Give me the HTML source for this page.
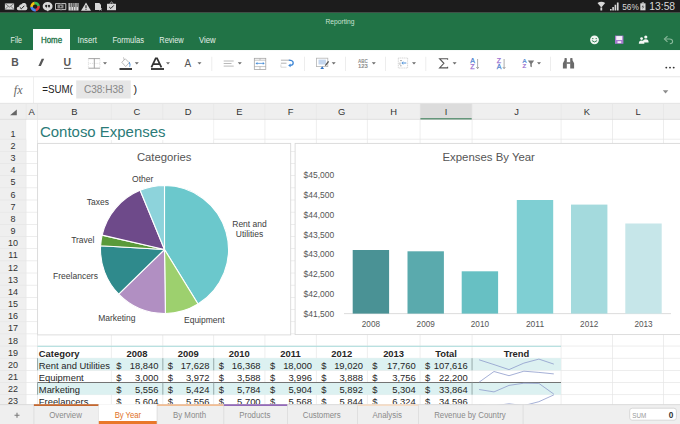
<!DOCTYPE html>
<html><head><meta charset="utf-8"><style>
html,body{margin:0;padding:0;width:680px;height:424px;overflow:hidden;background:#fff;}
svg{display:block;}
</style></head><body>
<svg width="680" height="424" viewBox="0 0 680 424">
<rect width="680" height="424" fill="#fff"/>
<rect x="0" y="0" width="680" height="12.8" fill="#1c1c1c"/>
<rect x="0" y="12.8" width="680" height="37.4" fill="#217346"/>
<rect x="4.9" y="3.4" width="9.2" height="6.2" fill="#d8d8d8"/><path d="M4.9 3.4 L9.5 7 L14.1 3.4 M4.9 9.6 L8.2 6.2 M14.1 9.6 L10.8 6.2" stroke="#555" stroke-width="0.7" fill="none"/>
<path d="M18.5 10.2 Q16.6 10.2 16.8 8.3 Q17 6.6 18.8 6.8 Q19.3 4.2 21.5 4.3 Q22.6 2.5 24.6 3 Q27 3.6 26.4 6.6 Q27.6 7.2 27.4 8.6 Q27.2 10.2 25.6 10.2Z" fill="#d8d8d8"/><path d="M19.8 7.3 L21.4 8.8 L24.3 5.8" stroke="#222" stroke-width="1" fill="none"/>
<g transform="translate(35.1,6.6)" fill="none" stroke-width="2.6"><path d="M-3.45 0.61 A3.5 3.5 0 0 1 -0.31 -3.49" stroke="#f4c20d"/><path d="M-0.61 -3.45 A3.5 3.5 0 0 1 3.49 -0.31" stroke="#3cba54"/><path d="M3.45 -0.61 A3.5 3.5 0 0 1 0.31 3.49" stroke="#db3236"/><path d="M0.61 3.45 A3.5 3.5 0 0 1 -3.49 0.31" stroke="#4885ed"/></g>
<path d="M47.6 2 A4.45 4.3 0 1 1 48.6 10.6 L48 11.6 L46.7 10.6 A4.45 4.3 0 0 1 47.6 2Z" fill="#d8d8d8"/><circle cx="46.2" cy="5.9" r="1.1" fill="#222"/><circle cx="49" cy="5.9" r="1.1" fill="#222"/><path d="M45.6 6.2 L46.2 8.2 L47 6.2 M48.4 6.2 L49 8.2 L49.8 6.2" fill="#222"/>
<path d="M55.5 3.6 H60.5 L61 4.2 L61.5 3.6 H65.8 V9.6 H61.5 L61 10.2 L60.5 9.6 H55.5Z" fill="none" stroke="#d8d8d8" stroke-width="0.9"/><rect x="57.5" y="4.6" width="6" height="3.8" fill="#d8d8d8" opacity="0.6"/><path d="M60 5.4 L62 6.5 L60 7.6Z" fill="#222"/>
<rect x="68.5" y="3" width="10" height="7.5" fill="#d8d8d8"/><path d="M71 3 V10.5 M73.5 3 V10.5 M76 3 V10.5" stroke="#222" stroke-width="0.5"/><path d="M70.2 3 V7 M72.4 3 V7 M74.7 3 V7 M77.2 3 V7" stroke="#444" stroke-width="0.9"/>
<path d="M86 2.5 L91 10.8 H81 Z" fill="#d8d8d8"/><path d="M86 5.2 V8.3" stroke="#222" stroke-width="1.1"/><circle cx="86" cy="9.5" r="0.55" fill="#222"/>
<path d="M95 3 H99.3 L101 4.7 V10 H95Z" fill="#d8d8d8"/><path d="M99.5 8.2 L102 10.5 M102 8.2 L99.5 10.5" stroke="#d8d8d8" stroke-width="0.7"/>
<rect x="107" y="3.8" width="9" height="6.4" fill="#d8d8d8"/><path d="M109.5 3.9 L111.5 2 L113.5 3.9" stroke="#d8d8d8" stroke-width="0.8" fill="none"/><path d="M109.2 7 L110.8 8.5 L113.8 5.4" stroke="#222" stroke-width="1" fill="none"/>
<path d="M597.5 3 Q601.3 0.5 605.2 3 L601.3 7.5Z" fill="#d8d8d8"/><rect x="600.4" y="7.5" width="1.8" height="3" fill="#d8d8d8"/>
<path d="M610 10.5 V9 H611.6 V10.5Z M612.3 10.5 V7 H613.9 V10.5Z M614.6 10.5 V4.8 H616.2 V10.5Z M616.9 10.5 V2.4 H618.6 V10.5Z" fill="#d8d8d8"/>
<text x="622.2" y="10" font-family="'Liberation Sans', sans-serif" font-size="8.3" fill="#d8d8d8">56%</text>
<rect x="640.3" y="3.3" width="5.2" height="7" fill="#d8d8d8"/><rect x="641.8" y="2.4" width="2.2" height="1" fill="#d8d8d8"/><path d="M643.6 4.2 L641.5 7.3 H643 L642.2 9.6 L644.4 6.4 H642.9Z" fill="#555"/>
<text x="649.3" y="10.4" font-family="'Liberation Sans', sans-serif" font-size="11" fill="#d8d8d8" textLength="25.8" lengthAdjust="spacingAndGlyphs">13:58</text>
<text x="340" y="23.8" text-anchor="middle" font-family="'Liberation Sans', sans-serif" font-size="6.7" fill="#c9e2d3">Reporting</text>
<rect x="33" y="29" width="37" height="22" fill="#fff"/>
<text x="10.6" y="43.2" font-family="'Liberation Sans', sans-serif" font-size="8.3" fill="#e3efe7" textLength="11.4" lengthAdjust="spacingAndGlyphs">File</text>
<text x="77.6" y="43.2" font-family="'Liberation Sans', sans-serif" font-size="8.3" fill="#e3efe7" textLength="19.4" lengthAdjust="spacingAndGlyphs">Insert</text>
<text x="112.4" y="43.2" font-family="'Liberation Sans', sans-serif" font-size="8.3" fill="#e3efe7" textLength="31.6" lengthAdjust="spacingAndGlyphs">Formulas</text>
<text x="159.3" y="43.2" font-family="'Liberation Sans', sans-serif" font-size="8.3" fill="#e3efe7" textLength="24.4" lengthAdjust="spacingAndGlyphs">Review</text>
<text x="199" y="43.2" font-family="'Liberation Sans', sans-serif" font-size="8.3" fill="#e3efe7" textLength="16.7" lengthAdjust="spacingAndGlyphs">View</text>
<text x="40.9" y="43.2" font-family="'Liberation Sans', sans-serif" font-size="8.3" fill="#217346" stroke="#217346" stroke-width="0.3" textLength="21.2" lengthAdjust="spacingAndGlyphs">Home</text>
<circle cx="594.5" cy="39.8" r="4.4" fill="#f0f5f1"/><circle cx="592.8" cy="38.6" r="0.7" fill="#217346"/><circle cx="596.2" cy="38.6" r="0.7" fill="#217346"/><path d="M591.9 40.6 Q594.5 43.3 597.1 40.6" stroke="#217346" stroke-width="0.9" fill="none"/>
<rect x="615" y="35.6" width="8.4" height="8.2" fill="#a77bd0"/><rect x="616.2" y="36.1" width="6" height="3.9" fill="#f4f0f8"/><rect x="617.5" y="41.2" width="3.7" height="1.9" fill="#f4f0f8"/>
<circle cx="645.8" cy="37" r="1.6" fill="#f4f8f5"/><path d="M642.7 42.5 Q642.7 39.3 645.8 39.3 Q648.6 39.3 648.6 42.5Z" fill="#f4f8f5"/><circle cx="641.6" cy="38.6" r="1.4" fill="#f4f8f5"/><path d="M638.8 43.7 Q638.8 40.6 641.6 40.6 Q644.4 40.6 644.4 43.7Z" fill="#f4f8f5"/>
<path d="M665.5 39 H669.5 Q672.6 39 672.6 41.5 Q672.6 43.7 669.8 43.7" stroke="#8ab99b" stroke-width="1.1" fill="none"/><path d="M667.5 36.2 L664.4 39 L667.5 41.8" stroke="#8ab99b" stroke-width="1.1" fill="none"/>
<rect x="0" y="50.2" width="680" height="26.6" fill="#fff"/>
<rect x="0" y="76.4" width="680" height="0.8" fill="#e2e2e2"/>
<text x="11.3" y="66" font-family="'Liberation Sans', sans-serif" font-size="10.4" font-weight="bold" fill="#585858">B</text>
<path d="M38.4 66.1 L40.9 66.1 L44.2 58.8 L41.7 58.8Z" fill="#585858"/>
<text x="63.6" y="66.2" font-family="'Liberation Sans', sans-serif" font-size="10.4" font-weight="bold" fill="#585858">U</text><rect x="64" y="67.9" width="7.4" height="1" fill="#585858"/>
<path d="M88.4 58.6 V68.2 M99.9 58.6 V68.2 M88.4 63.4 H99.9" stroke="#cfcfcf" stroke-width="0.7" stroke-dasharray="0.9 0.9" fill="none"/><path d="M88.4 58.6 H99.9 M88.4 68.2 H99.9 M94.3 58.6 V68.2" stroke="#9a9a9a" stroke-width="0.9"/>
<path d="M103 62.3 H107 L105 64.6Z" fill="#6a6a6a"/>
<path d="M121.8 62.3 L125.3 58.8 L129.2 62.7 L125.7 66.6Z" fill="none" stroke="#aaa" stroke-width="0.8"/><path d="M124.2 60 L123.5 57.3" stroke="#aaa" stroke-width="0.7"/><path d="M129.4 61.8 Q131.2 64 130.2 66.8 L129.3 66.8 Q130 64.5 129 62.6Z" fill="#2d7dd2"/><rect x="119.5" y="68.2" width="12.5" height="1.6" fill="#111"/>
<path d="M134.8 62.3 H138.8 L136.8 64.6Z" fill="#6a6a6a"/>
<path d="M151.4 67.4 L155.7 58.4 H157.1 L161.4 67.4 M153.3 64.2 H159.6" stroke="#333" stroke-width="1.75" fill="none"/><rect x="151" y="68.2" width="13" height="1.6" fill="#111"/>
<path d="M166 62.3 H170 L168 64.6Z" fill="#6a6a6a"/>
<text x="184.6" y="66.8" font-family="'Liberation Sans', sans-serif" font-size="10" fill="#555">A</text>
<path d="M197.5 62.3 H201.5 L199.5 64.6Z" fill="#6a6a6a"/>
<rect x="211.5" y="56.7" width="0.7" height="14.3" fill="#e6e6e6"/>
<path d="M223.7 61 H233.7 M223.7 63.5 H231.5 M223.7 66.1 H233.7" stroke="#a8a8a8" stroke-width="0.8"/>
<path d="M237.8 62.3 H241.8 L239.8 64.6Z" fill="#6a6a6a"/>
<rect x="254.3" y="58.3" width="11.5" height="11.3" fill="none" stroke="#a0a0a0" stroke-width="0.75"/><path d="M254.3 60.2 H265.8 M254.3 66.6 H265.8 M260 58.3 V60.2 M260 66.6 V69.6" stroke="#a0a0a0" stroke-width="0.6"/><path d="M256.6 63.4 H263.6" stroke="#4a8fd8" stroke-width="0.8"/><path d="M255.5 63.4 L257.4 62.1 V64.7Z M264.7 63.4 L262.8 62.1 V64.7Z" fill="#4a8fd8"/>
<path d="M280.9 60.2 H289.5 M280.9 63.2 H286.5" stroke="#a0a0a0" stroke-width="0.8"/><path d="M280.9 67.2 H286.5 M280.9 67.2 V64.5" stroke="#c8c8c8" stroke-width="0.7"/><path d="M288.8 60.2 Q293.2 60.3 293.2 63 Q293.2 65.4 290.2 65.4" stroke="#3d86d6" stroke-width="1.3" fill="none"/><path d="M288.2 65.4 L290.6 63.6 V67.2Z" fill="#3d86d6"/>
<rect x="304.2" y="56.7" width="0.7" height="14.3" fill="#e6e6e6"/>
<rect x="316.4" y="58.2" width="11.4" height="8.4" fill="#fff" stroke="#b4b4b4" stroke-width="0.8"/><rect x="318.5" y="59.6" width="7.4" height="4.9" fill="#c4d6ee"/><path d="M320.3 68.9 L322.2 66.2 L324.1 68.9Z" fill="#2f74c8"/><path d="M328.6 61.3 L325.3 65.6" stroke="#555" stroke-width="1.3"/>
<path d="M331.7 62.3 H335.7 L333.7 64.6Z" fill="#6a6a6a"/>
<rect x="345" y="56.7" width="0.7" height="14.3" fill="#e6e6e6"/>
<text x="357.9" y="62.6" font-family="'Liberation Sans', sans-serif" font-size="5.6" font-weight="bold" fill="#8a8a8a" textLength="10" lengthAdjust="spacingAndGlyphs">ABC</text><text x="357.9" y="67.6" font-family="'Liberation Sans', sans-serif" font-size="6" font-weight="bold" fill="#8a8a8a" textLength="10" lengthAdjust="spacingAndGlyphs">123</text>
<path d="M371.8 62.3 H375.8 L373.8 64.6Z" fill="#6a6a6a"/>
<rect x="385.3" y="56.7" width="0.7" height="14.3" fill="#e6e6e6"/>
<rect x="398.3" y="58" width="9.3" height="10" fill="none" stroke="#c4c4c4" stroke-width="0.7" stroke-dasharray="1.2 0.6"/><path d="M400 60.6 H402 M400 65.8 H401.6 M400 62.5 V64.8" stroke="#999" stroke-width="0.8"/><path d="M402 63 H406.3" stroke="#4a8fd8" stroke-width="1"/><path d="M403.3 61.7 L401.8 63 L403.3 64.3" stroke="#4a8fd8" stroke-width="0.8" fill="none"/>
<path d="M412 62.3 H416 L414 64.6Z" fill="#6a6a6a"/>
<rect x="425.5" y="56.7" width="0.7" height="14.3" fill="#e6e6e6"/>
<path d="M447.6 59.8 V58.7 H439.6 L443.9 63.3 L439.6 67.9 H447.6 V66.8" stroke="#555" stroke-width="1.1" fill="none" stroke-linejoin="miter"/>
<path d="M452.6 62.3 H456.6 L454.6 64.6Z" fill="#6a6a6a"/>
<text x="470.2" y="63.2" font-family="'Liberation Sans', sans-serif" font-size="7" fill="#4a7fd0" stroke="#4a7fd0" stroke-width="0.25">A</text><text x="470.2" y="69" font-family="'Liberation Sans', sans-serif" font-size="7" fill="#9a6fd0" stroke="#9a6fd0" stroke-width="0.25">Z</text>
<path d="M477.59999999999997 59 V68.5 M476.3 67 L477.59999999999997 68.7 L478.9 67" stroke="#888" stroke-width="0.7" fill="none"/>
<text x="496.7" y="63.2" font-family="'Liberation Sans', sans-serif" font-size="7" fill="#9a6fd0" stroke="#9a6fd0" stroke-width="0.25">Z</text><text x="496.7" y="69" font-family="'Liberation Sans', sans-serif" font-size="7" fill="#4a7fd0" stroke="#4a7fd0" stroke-width="0.25">A</text>
<path d="M504.09999999999997 59 V68.5 M502.8 67 L504.09999999999997 68.7 L505.4 67" stroke="#888" stroke-width="0.7" fill="none"/>
<text x="522.4" y="62.8" font-family="'Liberation Sans', sans-serif" font-size="6" fill="#4a7fd0" stroke="#4a7fd0" stroke-width="0.2">A</text><text x="522.4" y="68.4" font-family="'Liberation Sans', sans-serif" font-size="6" fill="#9a6fd0" stroke="#9a6fd0" stroke-width="0.2">Z</text><path d="M527.8 60.6 H534.2 L531.8 63.8 V67.2 L530.3 66.4 V63.8Z" fill="#777"/>
<path d="M537 62.3 H541 L539 64.6Z" fill="#6a6a6a"/>
<rect x="550.2" y="56.7" width="0.7" height="14.3" fill="#e6e6e6"/>
<path d="M562.9 68.6 V63.2 L564.5 60.3 V58.3 Q565.6 57.9 566.8 58.3 V68.6Z M574.1 68.6 V63.2 L572.5 60.3 V58.3 Q571.4 57.9 570.2 58.3 V68.6Z" fill="#6a6a6a"/><rect x="566.5" y="62.2" width="4" height="1.6" fill="#6a6a6a"/>
<circle cx="666.3" cy="67.6" r="0.95" fill="#333"/><circle cx="670" cy="67.6" r="0.95" fill="#333"/><circle cx="673.7" cy="67.6" r="0.95" fill="#333"/>
<text x="13.8" y="94.2" font-family="Liberation Serif, serif" font-style="italic" font-size="12" fill="#666">fx</text>
<rect x="33.2" y="77" width="0.6" height="26.3" fill="#e4e4e4"/>
<text x="42.2" y="92.6" font-family="'Liberation Sans', sans-serif" font-size="10.6" fill="#222" textLength="30.6" lengthAdjust="spacingAndGlyphs">=SUM(</text>
<rect x="76.2" y="80.4" width="54.5" height="18.1" fill="#e6e6e6"/>
<text x="83.9" y="92.6" font-family="'Liberation Sans', sans-serif" font-size="10.6" fill="#888" textLength="39.7" lengthAdjust="spacingAndGlyphs">C38:H38</text>
<text x="133.6" y="92.6" font-family="'Liberation Sans', sans-serif" font-size="10.6" fill="#222">)</text>
<path d="M662.8 90.2 H668.3 L665.55 93.4Z" fill="#8c8c8c"/>
<rect x="0" y="102.9" width="680" height="0.8" fill="#d8d8d8"/>
<rect x="0" y="103.7" width="680" height="15.599999999999994" fill="#efefef"/>
<rect x="420" y="103.7" width="52" height="15.599999999999994" fill="#dcdcdc"/>
<rect x="420" y="118.3" width="52" height="1.7" fill="#1f6e42"/>
<rect x="0" y="119.3" width="26" height="304.7" fill="#efefef"/>
<rect x="25.7" y="103.7" width="0.7" height="320.3" fill="#e6e6e6"/>
<rect x="37.2" y="103.7" width="0.7" height="320.3" fill="#e6e6e6"/>
<rect x="110.9" y="103.7" width="0.7" height="320.3" fill="#e6e6e6"/>
<rect x="162.5" y="103.7" width="0.7" height="320.3" fill="#e6e6e6"/>
<rect x="213.39999999999998" y="103.7" width="0.7" height="320.3" fill="#e6e6e6"/>
<rect x="264.59999999999997" y="103.7" width="0.7" height="320.3" fill="#e6e6e6"/>
<rect x="315.9" y="103.7" width="0.7" height="320.3" fill="#e6e6e6"/>
<rect x="366.9" y="103.7" width="0.7" height="320.3" fill="#e6e6e6"/>
<rect x="419.7" y="103.7" width="0.7" height="320.3" fill="#e6e6e6"/>
<rect x="471.7" y="103.7" width="0.7" height="320.3" fill="#e6e6e6"/>
<rect x="560.7" y="103.7" width="0.7" height="320.3" fill="#e6e6e6"/>
<rect x="612.3000000000001" y="103.7" width="0.7" height="320.3" fill="#e6e6e6"/>
<rect x="663.2" y="103.7" width="0.7" height="320.3" fill="#e6e6e6"/>
<rect x="0" y="138.79999999999998" width="680" height="0.7" fill="#e6e6e6"/>
<rect x="0" y="150.96999999999997" width="680" height="0.7" fill="#e6e6e6"/>
<rect x="0" y="163.14" width="680" height="0.7" fill="#e6e6e6"/>
<rect x="0" y="175.30999999999997" width="680" height="0.7" fill="#e6e6e6"/>
<rect x="0" y="187.48" width="680" height="0.7" fill="#e6e6e6"/>
<rect x="0" y="199.64999999999998" width="680" height="0.7" fill="#e6e6e6"/>
<rect x="0" y="211.82" width="680" height="0.7" fill="#e6e6e6"/>
<rect x="0" y="223.98999999999998" width="680" height="0.7" fill="#e6e6e6"/>
<rect x="0" y="236.15999999999997" width="680" height="0.7" fill="#e6e6e6"/>
<rect x="0" y="248.32999999999998" width="680" height="0.7" fill="#e6e6e6"/>
<rect x="0" y="260.5" width="680" height="0.7" fill="#e6e6e6"/>
<rect x="0" y="272.67" width="680" height="0.7" fill="#e6e6e6"/>
<rect x="0" y="284.84" width="680" height="0.7" fill="#e6e6e6"/>
<rect x="0" y="297.01" width="680" height="0.7" fill="#e6e6e6"/>
<rect x="0" y="309.18" width="680" height="0.7" fill="#e6e6e6"/>
<rect x="0" y="321.34999999999997" width="680" height="0.7" fill="#e6e6e6"/>
<rect x="0" y="333.52" width="680" height="0.7" fill="#e6e6e6"/>
<rect x="0" y="345.69" width="680" height="0.7" fill="#e6e6e6"/>
<rect x="0" y="357.85999999999996" width="680" height="0.7" fill="#e6e6e6"/>
<rect x="0" y="370.03" width="680" height="0.7" fill="#e6e6e6"/>
<rect x="0" y="382.2" width="680" height="0.7" fill="#e6e6e6"/>
<rect x="0" y="394.36999999999995" width="680" height="0.7" fill="#e6e6e6"/>
<rect x="0" y="406.54" width="680" height="0.7" fill="#e6e6e6"/>
<rect x="0" y="118.89999999999999" width="680" height="0.8" fill="#dadada"/>
<text x="31.75" y="114.8" text-anchor="middle" font-family="'Liberation Sans', sans-serif" font-size="9.4" fill="#333">A</text>
<text x="74.35" y="114.8" text-anchor="middle" font-family="'Liberation Sans', sans-serif" font-size="9.4" fill="#333">B</text>
<text x="137.0" y="114.8" text-anchor="middle" font-family="'Liberation Sans', sans-serif" font-size="9.4" fill="#333">C</text>
<text x="188.25" y="114.8" text-anchor="middle" font-family="'Liberation Sans', sans-serif" font-size="9.4" fill="#333">D</text>
<text x="239.29999999999998" y="114.8" text-anchor="middle" font-family="'Liberation Sans', sans-serif" font-size="9.4" fill="#333">E</text>
<text x="290.54999999999995" y="114.8" text-anchor="middle" font-family="'Liberation Sans', sans-serif" font-size="9.4" fill="#333">F</text>
<text x="341.7" y="114.8" text-anchor="middle" font-family="'Liberation Sans', sans-serif" font-size="9.4" fill="#333">G</text>
<text x="393.6" y="114.8" text-anchor="middle" font-family="'Liberation Sans', sans-serif" font-size="9.4" fill="#333">H</text>
<text x="446.0" y="114.8" text-anchor="middle" font-family="'Liberation Sans', sans-serif" font-size="9.4" fill="#333">I</text>
<text x="516.5" y="114.8" text-anchor="middle" font-family="'Liberation Sans', sans-serif" font-size="9.4" fill="#333">J</text>
<text x="586.8" y="114.8" text-anchor="middle" font-family="'Liberation Sans', sans-serif" font-size="9.4" fill="#333">K</text>
<text x="638.05" y="114.8" text-anchor="middle" font-family="'Liberation Sans', sans-serif" font-size="9.4" fill="#333">L</text>
<path d="M16.8 109.5 V115.2 H10.1Z" fill="#666"/>
<text x="13" y="136.50" text-anchor="middle" font-family="'Liberation Sans', sans-serif" font-size="9" fill="#333">1</text>
<text x="13" y="148.88" text-anchor="middle" font-family="'Liberation Sans', sans-serif" font-size="9" fill="#333">2</text>
<text x="13" y="161.05" text-anchor="middle" font-family="'Liberation Sans', sans-serif" font-size="9" fill="#333">3</text>
<text x="13" y="173.22" text-anchor="middle" font-family="'Liberation Sans', sans-serif" font-size="9" fill="#333">4</text>
<text x="13" y="185.39" text-anchor="middle" font-family="'Liberation Sans', sans-serif" font-size="9" fill="#333">5</text>
<text x="13" y="197.56" text-anchor="middle" font-family="'Liberation Sans', sans-serif" font-size="9" fill="#333">6</text>
<text x="13" y="209.73" text-anchor="middle" font-family="'Liberation Sans', sans-serif" font-size="9" fill="#333">7</text>
<text x="13" y="221.90" text-anchor="middle" font-family="'Liberation Sans', sans-serif" font-size="9" fill="#333">8</text>
<text x="13" y="234.07" text-anchor="middle" font-family="'Liberation Sans', sans-serif" font-size="9" fill="#333">9</text>
<text x="13" y="246.24" text-anchor="middle" font-family="'Liberation Sans', sans-serif" font-size="9" fill="#333">10</text>
<text x="13" y="258.42" text-anchor="middle" font-family="'Liberation Sans', sans-serif" font-size="9" fill="#333">11</text>
<text x="13" y="270.58" text-anchor="middle" font-family="'Liberation Sans', sans-serif" font-size="9" fill="#333">12</text>
<text x="13" y="282.75" text-anchor="middle" font-family="'Liberation Sans', sans-serif" font-size="9" fill="#333">13</text>
<text x="13" y="294.93" text-anchor="middle" font-family="'Liberation Sans', sans-serif" font-size="9" fill="#333">14</text>
<text x="13" y="307.09" text-anchor="middle" font-family="'Liberation Sans', sans-serif" font-size="9" fill="#333">15</text>
<text x="13" y="319.26" text-anchor="middle" font-family="'Liberation Sans', sans-serif" font-size="9" fill="#333">16</text>
<text x="13" y="331.44" text-anchor="middle" font-family="'Liberation Sans', sans-serif" font-size="9" fill="#333">17</text>
<text x="13" y="343.60" text-anchor="middle" font-family="'Liberation Sans', sans-serif" font-size="9" fill="#333">18</text>
<text x="13" y="355.77" text-anchor="middle" font-family="'Liberation Sans', sans-serif" font-size="9" fill="#333">19</text>
<text x="13" y="367.94" text-anchor="middle" font-family="'Liberation Sans', sans-serif" font-size="9" fill="#333">20</text>
<text x="13" y="380.11" text-anchor="middle" font-family="'Liberation Sans', sans-serif" font-size="9" fill="#333">21</text>
<text x="13" y="392.28" text-anchor="middle" font-family="'Liberation Sans', sans-serif" font-size="9" fill="#333">22</text>
<text x="13" y="404.45" text-anchor="middle" font-family="'Liberation Sans', sans-serif" font-size="9" fill="#333">23</text>
<text x="13" y="416.62" text-anchor="middle" font-family="'Liberation Sans', sans-serif" font-size="9" fill="#333">24</text>
<rect x="26.4" y="119.8" width="186.9" height="20.299999999999997" fill="#fff"/>
<rect x="37.2" y="119.3" width="0.7" height="30" fill="#e6e6e6"/>
<text x="40" y="137.2" font-family="'Liberation Sans', sans-serif" font-size="15.4" fill="#2b7b78" textLength="125.5" lengthAdjust="spacingAndGlyphs">Contoso Expenses</text>
<rect x="37.6" y="143.4" width="253.1" height="191.5" fill="#fff" stroke="#d9d9d9" stroke-width="0.9"/>
<rect x="295.1" y="143.4" width="420" height="191.2" fill="#fff" stroke="#d9d9d9" stroke-width="0.9"/>
<text x="164.2" y="161" text-anchor="middle" font-family="'Liberation Sans', sans-serif" font-size="11.3" fill="#555">Categories</text>
<path d="M164.5 249.5 L164.50 185.50 A64 64 0 0 1 198.04 304.01Z" fill="#6bc8cc" stroke="#fff" stroke-width="1.1" stroke-linejoin="round"/>
<path d="M164.5 249.5 L198.04 304.01 A64 64 0 0 1 165.39 313.49Z" fill="#9dd06e" stroke="#fff" stroke-width="1.1" stroke-linejoin="round"/>
<path d="M164.5 249.5 L165.39 313.49 A64 64 0 0 1 118.70 294.20Z" fill="#b18fc2" stroke="#fff" stroke-width="1.1" stroke-linejoin="round"/>
<path d="M164.5 249.5 L118.70 294.20 A64 64 0 0 1 100.61 245.70Z" fill="#2f8a8c" stroke="#fff" stroke-width="1.1" stroke-linejoin="round"/>
<path d="M164.5 249.5 L100.61 245.70 A64 64 0 0 1 102.14 235.10Z" fill="#5a9a3a" stroke="#fff" stroke-width="1.1" stroke-linejoin="round"/>
<path d="M164.5 249.5 L102.14 235.10 A64 64 0 0 1 140.11 190.33Z" fill="#6e4a8a" stroke="#fff" stroke-width="1.1" stroke-linejoin="round"/>
<path d="M164.5 249.5 L140.11 190.33 A64 64 0 0 1 164.50 185.50Z" fill="#8dd3db" stroke="#fff" stroke-width="1.1" stroke-linejoin="round"/>
<text x="142.7" y="181.8" text-anchor="middle" font-family="'Liberation Sans', sans-serif" font-size="8.9" fill="#404040" textLength="21.26" lengthAdjust="spacingAndGlyphs">Other</text>
<text x="97.8" y="205.4" text-anchor="middle" font-family="'Liberation Sans', sans-serif" font-size="8.9" fill="#404040" textLength="22.20" lengthAdjust="spacingAndGlyphs">Taxes</text>
<text x="82.8" y="243.1" text-anchor="middle" font-family="'Liberation Sans', sans-serif" font-size="8.9" fill="#404040" textLength="23.30" lengthAdjust="spacingAndGlyphs">Travel</text>
<text x="75.5" y="278.9" text-anchor="middle" font-family="'Liberation Sans', sans-serif" font-size="8.9" fill="#404040" textLength="44.87" lengthAdjust="spacingAndGlyphs">Freelancers</text>
<text x="116.8" y="321.4" text-anchor="middle" font-family="'Liberation Sans', sans-serif" font-size="8.9" fill="#404040" textLength="37.32" lengthAdjust="spacingAndGlyphs">Marketing</text>
<text x="204.3" y="323.3" text-anchor="middle" font-family="'Liberation Sans', sans-serif" font-size="8.9" fill="#404040" textLength="40.63" lengthAdjust="spacingAndGlyphs">Equipment</text>
<text x="249.5" y="227.1" text-anchor="middle" font-family="'Liberation Sans', sans-serif" font-size="8.9" fill="#404040" textLength="34.50" lengthAdjust="spacingAndGlyphs">Rent and</text>
<text x="249.5" y="237" text-anchor="middle" font-family="'Liberation Sans', sans-serif" font-size="8.9" fill="#404040" textLength="27.39" lengthAdjust="spacingAndGlyphs">Utilities</text>
<text x="488.7" y="160.8" text-anchor="middle" font-family="'Liberation Sans', sans-serif" font-size="11.4" fill="#555">Expenses By Year</text>
<text x="334.2" y="317.10" text-anchor="end" font-family="'Liberation Sans', sans-serif" font-size="9.1" fill="#555" textLength="30.72" lengthAdjust="spacingAndGlyphs">$41,500</text>
<text x="334.2" y="297.21" text-anchor="end" font-family="'Liberation Sans', sans-serif" font-size="9.1" fill="#555" textLength="30.72" lengthAdjust="spacingAndGlyphs">$42,000</text>
<text x="334.2" y="277.33" text-anchor="end" font-family="'Liberation Sans', sans-serif" font-size="9.1" fill="#555" textLength="30.72" lengthAdjust="spacingAndGlyphs">$42,500</text>
<text x="334.2" y="257.44" text-anchor="end" font-family="'Liberation Sans', sans-serif" font-size="9.1" fill="#555" textLength="30.72" lengthAdjust="spacingAndGlyphs">$43,000</text>
<text x="334.2" y="237.56" text-anchor="end" font-family="'Liberation Sans', sans-serif" font-size="9.1" fill="#555" textLength="30.72" lengthAdjust="spacingAndGlyphs">$43,500</text>
<text x="334.2" y="217.67" text-anchor="end" font-family="'Liberation Sans', sans-serif" font-size="9.1" fill="#555" textLength="30.72" lengthAdjust="spacingAndGlyphs">$44,000</text>
<text x="334.2" y="197.79" text-anchor="end" font-family="'Liberation Sans', sans-serif" font-size="9.1" fill="#555" textLength="30.72" lengthAdjust="spacingAndGlyphs">$44,500</text>
<text x="334.2" y="177.90" text-anchor="end" font-family="'Liberation Sans', sans-serif" font-size="9.1" fill="#555" textLength="30.72" lengthAdjust="spacingAndGlyphs">$45,000</text>
<rect x="344" y="313.20000000000005" width="327" height="0.9" fill="#d9d9d9"/>
<rect x="352.7" y="250" width="36.4" height="63.60000000000002" fill="#4a9295"/>
<text x="370.9" y="327" text-anchor="middle" font-family="'Liberation Sans', sans-serif" font-size="9" fill="#555" textLength="18.2" lengthAdjust="spacingAndGlyphs">2008</text>
<rect x="407.5" y="251.3" width="36.4" height="62.30000000000001" fill="#5aaaad"/>
<text x="425.7" y="327" text-anchor="middle" font-family="'Liberation Sans', sans-serif" font-size="9" fill="#555" textLength="18.2" lengthAdjust="spacingAndGlyphs">2009</text>
<rect x="461.7" y="271.3" width="36.4" height="42.30000000000001" fill="#67c0c3"/>
<text x="479.9" y="327" text-anchor="middle" font-family="'Liberation Sans', sans-serif" font-size="9" fill="#555" textLength="18.2" lengthAdjust="spacingAndGlyphs">2010</text>
<rect x="516.8" y="200" width="36.4" height="113.60000000000002" fill="#7fcfd3"/>
<text x="535.0" y="327" text-anchor="middle" font-family="'Liberation Sans', sans-serif" font-size="9" fill="#555" textLength="18.2" lengthAdjust="spacingAndGlyphs">2011</text>
<rect x="571" y="204.6" width="36.4" height="109.00000000000003" fill="#a4dadd"/>
<text x="589.2" y="327" text-anchor="middle" font-family="'Liberation Sans', sans-serif" font-size="9" fill="#555" textLength="18.2" lengthAdjust="spacingAndGlyphs">2012</text>
<rect x="625.3" y="223.5" width="36.4" height="90.10000000000002" fill="#c6e6e9"/>
<text x="643.5" y="327" text-anchor="middle" font-family="'Liberation Sans', sans-serif" font-size="9" fill="#555" textLength="18.2" lengthAdjust="spacingAndGlyphs">2013</text>
<rect x="37.5" y="358.15999999999997" width="523.5" height="12.17" fill="#dcf1f1"/>
<rect x="37.5" y="382.5" width="523.5" height="12.17" fill="#dcf1f1"/>
<rect x="37.5" y="345.79" width="523.5" height="1" fill="#a9dcdc"/>
<rect x="37.5" y="382.0" width="523.5" height="0.9" fill="#666"/>
<rect x="37.1" y="358.15999999999997" width="0.9" height="12.17" fill="#8fa3a3"/>
<rect x="37.1" y="382.5" width="0.9" height="12.17" fill="#8fa3a3"/>
<rect x="162.4" y="358.15999999999997" width="0.9" height="12.17" fill="#8fa3a3"/>
<rect x="162.4" y="382.5" width="0.9" height="12.17" fill="#8fa3a3"/>
<rect x="213.29999999999998" y="358.15999999999997" width="0.9" height="12.17" fill="#8fa3a3"/>
<rect x="213.29999999999998" y="382.5" width="0.9" height="12.17" fill="#8fa3a3"/>
<rect x="471.6" y="358.15999999999997" width="0.9" height="12.17" fill="#8fa3a3"/>
<rect x="471.6" y="382.5" width="0.9" height="12.17" fill="#8fa3a3"/>
<text x="38.8" y="356.99" font-family="'Liberation Sans', sans-serif" font-size="9.75" font-weight="bold" fill="#262626" textLength="40.74" lengthAdjust="spacingAndGlyphs">Category</text>
<text x="137.0" y="356.99" text-anchor="middle" font-family="'Liberation Sans', sans-serif" font-size="9.75" font-weight="bold" fill="#262626" textLength="20.91" lengthAdjust="spacingAndGlyphs">2008</text>
<text x="188.25" y="356.99" text-anchor="middle" font-family="'Liberation Sans', sans-serif" font-size="9.75" font-weight="bold" fill="#262626" textLength="20.91" lengthAdjust="spacingAndGlyphs">2009</text>
<text x="239.29999999999998" y="356.99" text-anchor="middle" font-family="'Liberation Sans', sans-serif" font-size="9.75" font-weight="bold" fill="#262626" textLength="20.91" lengthAdjust="spacingAndGlyphs">2010</text>
<text x="290.54999999999995" y="356.99" text-anchor="middle" font-family="'Liberation Sans', sans-serif" font-size="9.75" font-weight="bold" fill="#262626" textLength="20.39" lengthAdjust="spacingAndGlyphs">2011</text>
<text x="341.7" y="356.99" text-anchor="middle" font-family="'Liberation Sans', sans-serif" font-size="9.75" font-weight="bold" fill="#262626" textLength="20.91" lengthAdjust="spacingAndGlyphs">2012</text>
<text x="393.6" y="356.99" text-anchor="middle" font-family="'Liberation Sans', sans-serif" font-size="9.75" font-weight="bold" fill="#262626" textLength="20.91" lengthAdjust="spacingAndGlyphs">2013</text>
<text x="446.0" y="356.99" text-anchor="middle" font-family="'Liberation Sans', sans-serif" font-size="9.75" font-weight="bold" fill="#262626" textLength="21.75" lengthAdjust="spacingAndGlyphs">Total</text>
<text x="516.5" y="356.99" text-anchor="middle" font-family="'Liberation Sans', sans-serif" font-size="9.75" font-weight="bold" fill="#262626" textLength="25.59" lengthAdjust="spacingAndGlyphs">Trend</text>
<text x="38.8" y="368.96" font-family="'Liberation Sans', sans-serif" font-size="9.75" fill="#262626" textLength="71.05" lengthAdjust="spacingAndGlyphs">Rent and Utilities</text>
<text x="116.2" y="368.96" font-family="'Liberation Sans', sans-serif" font-size="9.75" fill="#262626" textLength="5.23" lengthAdjust="spacingAndGlyphs">$</text>
<text x="158.5" y="368.96" text-anchor="end" font-family="'Liberation Sans', sans-serif" font-size="9.75" fill="#262626" textLength="28.75" lengthAdjust="spacingAndGlyphs">18,840</text>
<text x="167.8" y="368.96" font-family="'Liberation Sans', sans-serif" font-size="9.75" fill="#262626" textLength="5.23" lengthAdjust="spacingAndGlyphs">$</text>
<text x="209.39999999999998" y="368.96" text-anchor="end" font-family="'Liberation Sans', sans-serif" font-size="9.75" fill="#262626" textLength="28.75" lengthAdjust="spacingAndGlyphs">17,628</text>
<text x="218.7" y="368.96" font-family="'Liberation Sans', sans-serif" font-size="9.75" fill="#262626" textLength="5.23" lengthAdjust="spacingAndGlyphs">$</text>
<text x="260.59999999999997" y="368.96" text-anchor="end" font-family="'Liberation Sans', sans-serif" font-size="9.75" fill="#262626" textLength="28.75" lengthAdjust="spacingAndGlyphs">16,368</text>
<text x="269.9" y="368.96" font-family="'Liberation Sans', sans-serif" font-size="9.75" fill="#262626" textLength="5.23" lengthAdjust="spacingAndGlyphs">$</text>
<text x="311.9" y="368.96" text-anchor="end" font-family="'Liberation Sans', sans-serif" font-size="9.75" fill="#262626" textLength="28.75" lengthAdjust="spacingAndGlyphs">18,000</text>
<text x="321.2" y="368.96" font-family="'Liberation Sans', sans-serif" font-size="9.75" fill="#262626" textLength="5.23" lengthAdjust="spacingAndGlyphs">$</text>
<text x="362.9" y="368.96" text-anchor="end" font-family="'Liberation Sans', sans-serif" font-size="9.75" fill="#262626" textLength="28.75" lengthAdjust="spacingAndGlyphs">19,020</text>
<text x="372.2" y="368.96" font-family="'Liberation Sans', sans-serif" font-size="9.75" fill="#262626" textLength="5.23" lengthAdjust="spacingAndGlyphs">$</text>
<text x="415.7" y="368.96" text-anchor="end" font-family="'Liberation Sans', sans-serif" font-size="9.75" fill="#262626" textLength="28.75" lengthAdjust="spacingAndGlyphs">17,760</text>
<text x="425.0" y="368.96" font-family="'Liberation Sans', sans-serif" font-size="9.75" fill="#262626" textLength="5.23" lengthAdjust="spacingAndGlyphs">$</text>
<text x="467.7" y="368.96" text-anchor="end" font-family="'Liberation Sans', sans-serif" font-size="9.75" fill="#262626" textLength="33.98" lengthAdjust="spacingAndGlyphs">107,616</text>
<text x="38.8" y="381.13" font-family="'Liberation Sans', sans-serif" font-size="9.75" fill="#262626" textLength="44.94" lengthAdjust="spacingAndGlyphs">Equipment</text>
<text x="116.2" y="381.13" font-family="'Liberation Sans', sans-serif" font-size="9.75" fill="#262626" textLength="5.23" lengthAdjust="spacingAndGlyphs">$</text>
<text x="158.5" y="381.13" text-anchor="end" font-family="'Liberation Sans', sans-serif" font-size="9.75" fill="#262626" textLength="23.52" lengthAdjust="spacingAndGlyphs">3,000</text>
<text x="167.8" y="381.13" font-family="'Liberation Sans', sans-serif" font-size="9.75" fill="#262626" textLength="5.23" lengthAdjust="spacingAndGlyphs">$</text>
<text x="209.39999999999998" y="381.13" text-anchor="end" font-family="'Liberation Sans', sans-serif" font-size="9.75" fill="#262626" textLength="23.52" lengthAdjust="spacingAndGlyphs">3,972</text>
<text x="218.7" y="381.13" font-family="'Liberation Sans', sans-serif" font-size="9.75" fill="#262626" textLength="5.23" lengthAdjust="spacingAndGlyphs">$</text>
<text x="260.59999999999997" y="381.13" text-anchor="end" font-family="'Liberation Sans', sans-serif" font-size="9.75" fill="#262626" textLength="23.52" lengthAdjust="spacingAndGlyphs">3,588</text>
<text x="269.9" y="381.13" font-family="'Liberation Sans', sans-serif" font-size="9.75" fill="#262626" textLength="5.23" lengthAdjust="spacingAndGlyphs">$</text>
<text x="311.9" y="381.13" text-anchor="end" font-family="'Liberation Sans', sans-serif" font-size="9.75" fill="#262626" textLength="23.52" lengthAdjust="spacingAndGlyphs">3,996</text>
<text x="321.2" y="381.13" font-family="'Liberation Sans', sans-serif" font-size="9.75" fill="#262626" textLength="5.23" lengthAdjust="spacingAndGlyphs">$</text>
<text x="362.9" y="381.13" text-anchor="end" font-family="'Liberation Sans', sans-serif" font-size="9.75" fill="#262626" textLength="23.52" lengthAdjust="spacingAndGlyphs">3,888</text>
<text x="372.2" y="381.13" font-family="'Liberation Sans', sans-serif" font-size="9.75" fill="#262626" textLength="5.23" lengthAdjust="spacingAndGlyphs">$</text>
<text x="415.7" y="381.13" text-anchor="end" font-family="'Liberation Sans', sans-serif" font-size="9.75" fill="#262626" textLength="23.52" lengthAdjust="spacingAndGlyphs">3,756</text>
<text x="425.0" y="381.13" font-family="'Liberation Sans', sans-serif" font-size="9.75" fill="#262626" textLength="5.23" lengthAdjust="spacingAndGlyphs">$</text>
<text x="467.7" y="381.13" text-anchor="end" font-family="'Liberation Sans', sans-serif" font-size="9.75" fill="#262626" textLength="28.75" lengthAdjust="spacingAndGlyphs">22,200</text>
<text x="38.8" y="393.30" font-family="'Liberation Sans', sans-serif" font-size="9.75" fill="#262626" textLength="41.27" lengthAdjust="spacingAndGlyphs">Marketing</text>
<text x="116.2" y="393.30" font-family="'Liberation Sans', sans-serif" font-size="9.75" fill="#262626" textLength="5.23" lengthAdjust="spacingAndGlyphs">$</text>
<text x="158.5" y="393.30" text-anchor="end" font-family="'Liberation Sans', sans-serif" font-size="9.75" fill="#262626" textLength="23.52" lengthAdjust="spacingAndGlyphs">5,556</text>
<text x="167.8" y="393.30" font-family="'Liberation Sans', sans-serif" font-size="9.75" fill="#262626" textLength="5.23" lengthAdjust="spacingAndGlyphs">$</text>
<text x="209.39999999999998" y="393.30" text-anchor="end" font-family="'Liberation Sans', sans-serif" font-size="9.75" fill="#262626" textLength="23.52" lengthAdjust="spacingAndGlyphs">5,424</text>
<text x="218.7" y="393.30" font-family="'Liberation Sans', sans-serif" font-size="9.75" fill="#262626" textLength="5.23" lengthAdjust="spacingAndGlyphs">$</text>
<text x="260.59999999999997" y="393.30" text-anchor="end" font-family="'Liberation Sans', sans-serif" font-size="9.75" fill="#262626" textLength="23.52" lengthAdjust="spacingAndGlyphs">5,784</text>
<text x="269.9" y="393.30" font-family="'Liberation Sans', sans-serif" font-size="9.75" fill="#262626" textLength="5.23" lengthAdjust="spacingAndGlyphs">$</text>
<text x="311.9" y="393.30" text-anchor="end" font-family="'Liberation Sans', sans-serif" font-size="9.75" fill="#262626" textLength="23.52" lengthAdjust="spacingAndGlyphs">5,904</text>
<text x="321.2" y="393.30" font-family="'Liberation Sans', sans-serif" font-size="9.75" fill="#262626" textLength="5.23" lengthAdjust="spacingAndGlyphs">$</text>
<text x="362.9" y="393.30" text-anchor="end" font-family="'Liberation Sans', sans-serif" font-size="9.75" fill="#262626" textLength="23.52" lengthAdjust="spacingAndGlyphs">5,892</text>
<text x="372.2" y="393.30" font-family="'Liberation Sans', sans-serif" font-size="9.75" fill="#262626" textLength="5.23" lengthAdjust="spacingAndGlyphs">$</text>
<text x="415.7" y="393.30" text-anchor="end" font-family="'Liberation Sans', sans-serif" font-size="9.75" fill="#262626" textLength="23.52" lengthAdjust="spacingAndGlyphs">5,304</text>
<text x="425.0" y="393.30" font-family="'Liberation Sans', sans-serif" font-size="9.75" fill="#262626" textLength="5.23" lengthAdjust="spacingAndGlyphs">$</text>
<text x="467.7" y="393.30" text-anchor="end" font-family="'Liberation Sans', sans-serif" font-size="9.75" fill="#262626" textLength="28.75" lengthAdjust="spacingAndGlyphs">33,864</text>
<text x="38.8" y="405.47" font-family="'Liberation Sans', sans-serif" font-size="9.75" fill="#262626" textLength="49.63" lengthAdjust="spacingAndGlyphs">Freelancers</text>
<text x="116.2" y="405.47" font-family="'Liberation Sans', sans-serif" font-size="9.75" fill="#262626" textLength="5.23" lengthAdjust="spacingAndGlyphs">$</text>
<text x="158.5" y="405.47" text-anchor="end" font-family="'Liberation Sans', sans-serif" font-size="9.75" fill="#262626" textLength="23.52" lengthAdjust="spacingAndGlyphs">5,604</text>
<text x="167.8" y="405.47" font-family="'Liberation Sans', sans-serif" font-size="9.75" fill="#262626" textLength="5.23" lengthAdjust="spacingAndGlyphs">$</text>
<text x="209.39999999999998" y="405.47" text-anchor="end" font-family="'Liberation Sans', sans-serif" font-size="9.75" fill="#262626" textLength="23.52" lengthAdjust="spacingAndGlyphs">5,556</text>
<text x="218.7" y="405.47" font-family="'Liberation Sans', sans-serif" font-size="9.75" fill="#262626" textLength="5.23" lengthAdjust="spacingAndGlyphs">$</text>
<text x="260.59999999999997" y="405.47" text-anchor="end" font-family="'Liberation Sans', sans-serif" font-size="9.75" fill="#262626" textLength="23.52" lengthAdjust="spacingAndGlyphs">5,700</text>
<text x="269.9" y="405.47" font-family="'Liberation Sans', sans-serif" font-size="9.75" fill="#262626" textLength="5.23" lengthAdjust="spacingAndGlyphs">$</text>
<text x="311.9" y="405.47" text-anchor="end" font-family="'Liberation Sans', sans-serif" font-size="9.75" fill="#262626" textLength="23.52" lengthAdjust="spacingAndGlyphs">5,568</text>
<text x="321.2" y="405.47" font-family="'Liberation Sans', sans-serif" font-size="9.75" fill="#262626" textLength="5.23" lengthAdjust="spacingAndGlyphs">$</text>
<text x="362.9" y="405.47" text-anchor="end" font-family="'Liberation Sans', sans-serif" font-size="9.75" fill="#262626" textLength="23.52" lengthAdjust="spacingAndGlyphs">5,844</text>
<text x="372.2" y="405.47" font-family="'Liberation Sans', sans-serif" font-size="9.75" fill="#262626" textLength="5.23" lengthAdjust="spacingAndGlyphs">$</text>
<text x="415.7" y="405.47" text-anchor="end" font-family="'Liberation Sans', sans-serif" font-size="9.75" fill="#262626" textLength="23.52" lengthAdjust="spacingAndGlyphs">6,324</text>
<text x="425.0" y="405.47" font-family="'Liberation Sans', sans-serif" font-size="9.75" fill="#262626" textLength="5.23" lengthAdjust="spacingAndGlyphs">$</text>
<text x="467.7" y="405.47" text-anchor="end" font-family="'Liberation Sans', sans-serif" font-size="9.75" fill="#262626" textLength="28.75" lengthAdjust="spacingAndGlyphs">34,596</text>
<polyline points="479.1,359.8 494.0,364.6 509.0,369.6 523.9,363.1 538.9,359.1 553.8,364.1" fill="none" stroke="#8e9ccc" stroke-width="0.8"/>
<polyline points="479.1,382.2 494.0,371.5 509.0,375.7 523.9,371.2 538.9,372.4 553.8,373.9" fill="none" stroke="#8e9ccc" stroke-width="0.8"/>
<polyline points="479.1,389.5 494.0,391.9 509.0,385.4 523.9,383.2 538.9,383.4 553.8,394.1" fill="none" stroke="#8e9ccc" stroke-width="0.8"/>
<polyline points="479.1,405.1 494.0,405.8 509.0,403.8 523.9,405.6 538.9,401.7 553.8,394.9" fill="none" stroke="#8e9ccc" stroke-width="0.8"/>
<rect x="0" y="404.3" width="680" height="19.69999999999999" fill="#efefef"/>
<rect x="0" y="404.3" width="680" height="0.8" fill="#d6d6d6"/>
<path d="M14.5 415.3 H19.5 M17 412.8 V417.8" stroke="#7a7a7a" stroke-width="1.1"/>
<rect x="33.6" y="404.3" width="0.7" height="19.69999999999999" fill="#d8d8d8"/>
<rect x="33.9" y="404.3" width="64.9" height="1.6" fill="#c0591b"/>
<text x="65.55" y="417.8" text-anchor="middle" font-family="'Liberation Sans', sans-serif" font-size="8.4" fill="#8a8a8a" textLength="32.71" lengthAdjust="spacingAndGlyphs">Overview</text>
<rect x="98.5" y="404.3" width="0.7" height="19.69999999999999" fill="#d8d8d8"/>
<rect x="98.8" y="404.3" width="58.2" height="19.69999999999999" fill="#fff"/>
<rect x="98.8" y="421" width="58.2" height="3" fill="#e9782a"/>
<text x="127.9" y="417.8" text-anchor="middle" font-family="'Liberation Sans', sans-serif" font-size="8.3" fill="#e0701e" textLength="26.54" lengthAdjust="spacingAndGlyphs">By Year</text>
<rect x="156.7" y="404.3" width="0.7" height="19.69999999999999" fill="#d8d8d8"/>
<rect x="157" y="404.3" width="66.80000000000001" height="1.6" fill="#f2b88a"/>
<text x="189.6" y="417.8" text-anchor="middle" font-family="'Liberation Sans', sans-serif" font-size="8.4" fill="#8a8a8a" textLength="33.16" lengthAdjust="spacingAndGlyphs">By Month</text>
<rect x="223.5" y="404.3" width="0.7" height="19.69999999999999" fill="#d8d8d8"/>
<rect x="223.8" y="404.3" width="63.69999999999999" height="1.6" fill="#8a5db3"/>
<text x="254.85" y="417.8" text-anchor="middle" font-family="'Liberation Sans', sans-serif" font-size="8.4" fill="#8a8a8a" textLength="30.98" lengthAdjust="spacingAndGlyphs">Products</text>
<rect x="287.2" y="404.3" width="0.7" height="19.69999999999999" fill="#d8d8d8"/>
<text x="321.7" y="417.8" text-anchor="middle" font-family="'Liberation Sans', sans-serif" font-size="8.4" fill="#8a8a8a" textLength="37.95" lengthAdjust="spacingAndGlyphs">Customers</text>
<rect x="357.2" y="404.3" width="0.7" height="19.69999999999999" fill="#d8d8d8"/>
<rect x="357.5" y="404.3" width="61.0" height="1.6" fill="#f7dcc4"/>
<text x="387.2" y="417.8" text-anchor="middle" font-family="'Liberation Sans', sans-serif" font-size="8.4" fill="#8a8a8a" textLength="29.23" lengthAdjust="spacingAndGlyphs">Analysis</text>
<rect x="418.2" y="404.3" width="0.7" height="19.69999999999999" fill="#d8d8d8"/>
<text x="469.95" y="417.8" text-anchor="middle" font-family="'Liberation Sans', sans-serif" font-size="8.4" fill="#8a8a8a" textLength="71.56" lengthAdjust="spacingAndGlyphs">Revenue by Country</text>
<rect x="522.7" y="404.3" width="0.7" height="19.69999999999999" fill="#d8d8d8"/>
<rect x="629.7" y="408.2" width="46.7" height="12" rx="2.5" fill="#fff" stroke="#cfcfcf" stroke-width="0.8"/>
<text x="632.3" y="418" font-family="'Liberation Sans', sans-serif" font-size="7.4" fill="#999" textLength="14" lengthAdjust="spacingAndGlyphs">SUM</text>
<text x="673.3" y="418" text-anchor="end" font-family="'Liberation Sans', sans-serif" font-size="9.2" font-weight="bold" fill="#333" textLength="4.6" lengthAdjust="spacingAndGlyphs">0</text>
</svg></body></html>
